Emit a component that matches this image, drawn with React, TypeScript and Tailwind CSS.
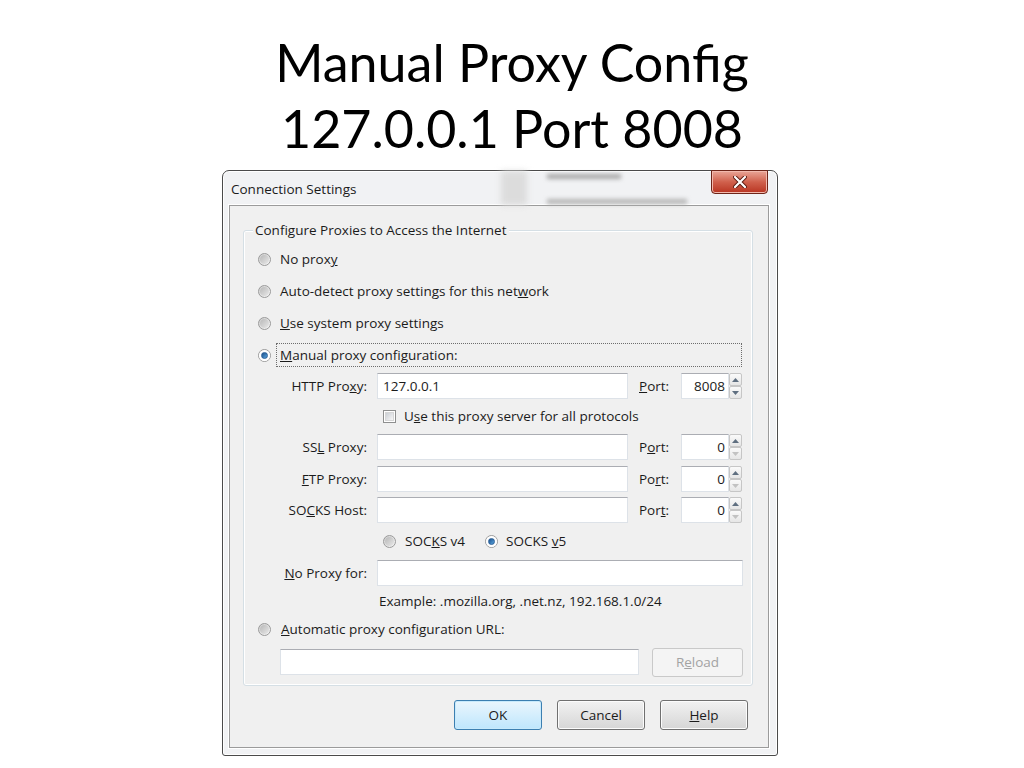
import type { ReactNode } from 'react'

const UI = { fontFamily: '"Open Sans", "Noto Sans", Arial, sans-serif' }

function Radio({ checked = false }: { checked?: boolean }) {
  return (
    <span className="w-[13px] h-[13px] shrink-0 rounded-full border border-[#9a9a9a] bg-gradient-to-br from-[#cfcfcf] to-[#f6f6f6] flex items-center justify-center">
      {checked ? (
        <span className="w-[11px] h-[11px] rounded-full bg-white flex items-center justify-center">
          <span className="w-[7px] h-[7px] rounded-full bg-gradient-to-br from-[#1b4f8a] to-[#5aa6e0] border border-[#2a5e96]" />
        </span>
      ) : (
        <span className="w-[9px] h-[9px] rounded-full bg-gradient-to-br from-[#b8b8b8] to-[#e8e8e8]" />
      )}
    </span>
  )
}

function Checkbox() {
  return (
    <span className="w-[13px] h-[13px] shrink-0 border border-[#8e8f8f] bg-white flex items-center justify-center">
      <span className="w-[9px] h-[9px] bg-gradient-to-br from-[#cbcfd5] to-[#f7f7f7] border border-[#d6d6d6]" />
    </span>
  )
}

function Arrow({ up, dim }: { up?: boolean; dim?: boolean }) {
  return (
    <span className="flex-1 border border-[#c6c6c6] rounded-[2px] bg-gradient-to-b from-[#fafafa] to-[#e6e6e6] flex items-center justify-center">
      <svg width="7" height="4" viewBox="0 0 7 4">
        <path d={up ? 'M0 4 L3.5 0 L7 4 Z' : 'M0 0 L3.5 4 L7 0 Z'} fill={dim ? '#c2c2c2' : '#5f6f80'} />
      </svg>
    </span>
  )
}

function Input({ w, value, right }: { w: string; value?: string; right?: boolean }) {
  return (
    <div
      className={`${w} h-[26px] bg-white border border-[#dde2e8] border-t-[#abadb3] flex items-center px-[5px] ${right ? 'justify-end pr-[3px]' : ''}`}
    >
      {value}
    </div>
  )
}

function Port({ value, downDim }: { value: string; downDim?: boolean }) {
  return (
    <div className="flex">
      <Input w="w-[48px]" value={value} right />
      <div className="w-[13px] h-[26px] flex flex-col">
        <Arrow up />
        <Arrow dim={downDim} />
      </div>
    </div>
  )
}

function Row({ h, children }: { h: string; children: ReactNode }) {
  return <div className={`${h} flex items-center`}>{children}</div>
}

function Field({ label, value, port, value2 }: { label: ReactNode; value?: string; port: ReactNode; value2: string }) {
  return (
    <>
      <span className="w-[123px] text-right whitespace-nowrap">{label}</span>
      <span className="ml-[10px]">
        <Input w="w-[251px]" value={value} />
      </span>
      <span className="ml-[11px] w-[42px]">{port}</span>
      <Port value={value2} downDim={value2 === '0'} />
    </>
  )
}

function Button({ children, primary }: { children: ReactNode; primary?: boolean }) {
  return (
    <div
      className={`w-[88px] h-[30px] rounded-[3px] border flex items-center justify-center ${
        primary
          ? 'border-[#3c7fb1] bg-gradient-to-b from-[#eaf6fd] to-[#bee6fd] shadow-[inset_0_0_0_1px_#c8eafc]'
          : 'border-[#707070] bg-gradient-to-b from-[#f2f2f2] to-[#d6d6d6] shadow-[inset_0_0_0_1px_#fcfcfc]'
      }`}
    >
      {children}
    </div>
  )
}

export default function App() {
  return (
    <div className="w-[1024px] h-[768px] bg-white overflow-hidden">
      <div
        className="pt-[29px] text-center text-[52px] leading-[66px] text-black"
        style={{ fontFamily: 'Lato, "Open Sans", sans-serif' }}
      >
        <div>Manual Proxy Config</div>
        <div>127.0.0.1 Port 8008</div>
      </div>

      <div
        className="mt-[9px] ml-[222px] w-[556px] h-[586px] border border-[#4a4a4a] rounded-t-[7px] rounded-b-[3px] bg-[#f1f2f4] shadow-[inset_0_0_0_1px_#ffffff] text-[13.5px] text-[#1b1b1b]"
        style={UI}
      >
        <div className="relative h-[34px] flex items-center pl-[8px] pt-[2px]">
          <div className="absolute left-[278px] top-0 w-[26px] h-[34px] bg-[#dcdcdc] blur-[3px]" />
          <div className="absolute left-[324px] top-[3px] w-[74px] h-[5px] bg-[#a9a9a9] blur-[2px]" />
          <div className="absolute left-[324px] top-[28px] w-[140px] h-[5px] bg-[#b5b5b5] blur-[2px]" />
          <span className="relative">Connection Settings</span>
          <div className="absolute left-[488px] top-[-1px] w-[57px] h-[24px] rounded-b-[4px] border border-[#6e2418] bg-gradient-to-b from-[#e9a597] via-[#d0604c] to-[#b8321f] shadow-[inset_0_0_0_1px_#f2b9ad] flex items-center justify-center">
            <svg width="14" height="12" viewBox="0 0 14 12">
              <path d="M2 1 L12 11 M12 1 L2 11" stroke="#5a1a10" strokeWidth="4" strokeLinecap="round" />
              <path d="M2 1 L12 11 M12 1 L2 11" stroke="#ffffff" strokeWidth="2.2" strokeLinecap="round" />
            </svg>
          </div>
        </div>

        <div className="ml-[6px] w-[540px] h-[543px] border border-[#9b9b9b] bg-[#f0f0f0] shadow-[0_0_0_1px_#ffffff] pt-[24px] pl-[13px] pr-[15px]">
          <div className="relative w-[510px] h-[456px] border border-[#d5dfe5] rounded-[3px] shadow-[inset_0_0_0_1px_#ffffff] pt-[13px]">
            <span className="absolute left-[9px] top-[-10px] px-[2px] bg-[#f0f0f0] leading-[18px]">
              Configure Proxies to Access the Internet
            </span>

            <Row h="h-[31px]">
              <span className="ml-[14px]"><Radio /></span>
              <span className="ml-[9px]">No prox<u>y</u></span>
            </Row>
            <Row h="h-[32px]">
              <span className="ml-[14px]"><Radio /></span>
              <span className="ml-[9px]">Auto-detect proxy settings for this net<u>w</u>ork</span>
            </Row>
            <Row h="h-[32px]">
              <span className="ml-[14px]"><Radio /></span>
              <span className="ml-[9px]"><u>U</u>se system proxy settings</span>
            </Row>
            <Row h="h-[32px]">
              <span className="ml-[14px]"><Radio checked /></span>
              <span className="ml-[5px] flex-1 mr-[10px] h-[24px] border border-dotted border-[#6d6d6d] flex items-center pl-[3px]">
                <u>M</u>anual proxy configuration:
              </span>
            </Row>
            <Row h="h-[30px]">
              <Field
                label={<>HTTP Pro<u>x</u>y:</>}
                value="127.0.0.1"
                port={<><u>P</u>ort:</>}
                value2="8008"
              />
            </Row>
            <Row h="h-[30px]">
              <span className="ml-[139px]"><Checkbox /></span>
              <span className="ml-[8px]">U<u>s</u>e this proxy server for all protocols</span>
            </Row>
            <Row h="h-[32px]">
              <Field label={<>SS<u>L</u> Proxy:</>} port={<>P<u>o</u>rt:</>} value2="0" />
            </Row>
            <Row h="h-[32px]">
              <Field label={<><u>F</u>TP Proxy:</>} port={<>Po<u>r</u>t:</>} value2="0" />
            </Row>
            <Row h="h-[30px]">
              <Field label={<>SO<u>C</u>KS Host:</>} port={<>Por<u>t</u>:</>} value2="0" />
            </Row>
            <Row h="h-[32px]">
              <span className="ml-[139px]"><Radio /></span>
              <span className="ml-[9px]">SOC<u>K</u>S v4</span>
              <span className="ml-[20px]"><Radio checked /></span>
              <span className="ml-[8px]">SOCKS <u>v</u>5</span>
            </Row>
            <Row h="h-[32px]">
              <span className="w-[123px] text-right"><u>N</u>o Proxy for:</span>
              <span className="ml-[10px]">
                <Input w="w-[366px]" />
              </span>
            </Row>
            <Row h="h-[24px]">
              <span className="ml-[135px]">Example: .mozilla.org, .net.nz, 192.168.1.0/24</span>
            </Row>
            <Row h="h-[32px]">
              <span className="ml-[14px]"><Radio /></span>
              <span className="ml-[10px]"><u>A</u>utomatic proxy configuration URL:</span>
            </Row>
            <Row h="h-[34px]">
              <span className="ml-[36px]">
                <Input w="w-[359px]" />
              </span>
              <span className="ml-[13px] w-[91px] h-[29px] rounded-[3px] border border-[#c9c9c9] bg-[#f4f4f4] text-[#a3a3a3] flex items-center justify-center">
                R<u>e</u>load
              </span>
            </Row>
          </div>

          <div className="mt-[14px] pr-[5px] flex justify-end gap-[15px]">
            <Button primary>OK</Button>
            <Button>Cancel</Button>
            <Button><u>H</u>elp</Button>
          </div>
        </div>
      </div>
    </div>
  )
}
